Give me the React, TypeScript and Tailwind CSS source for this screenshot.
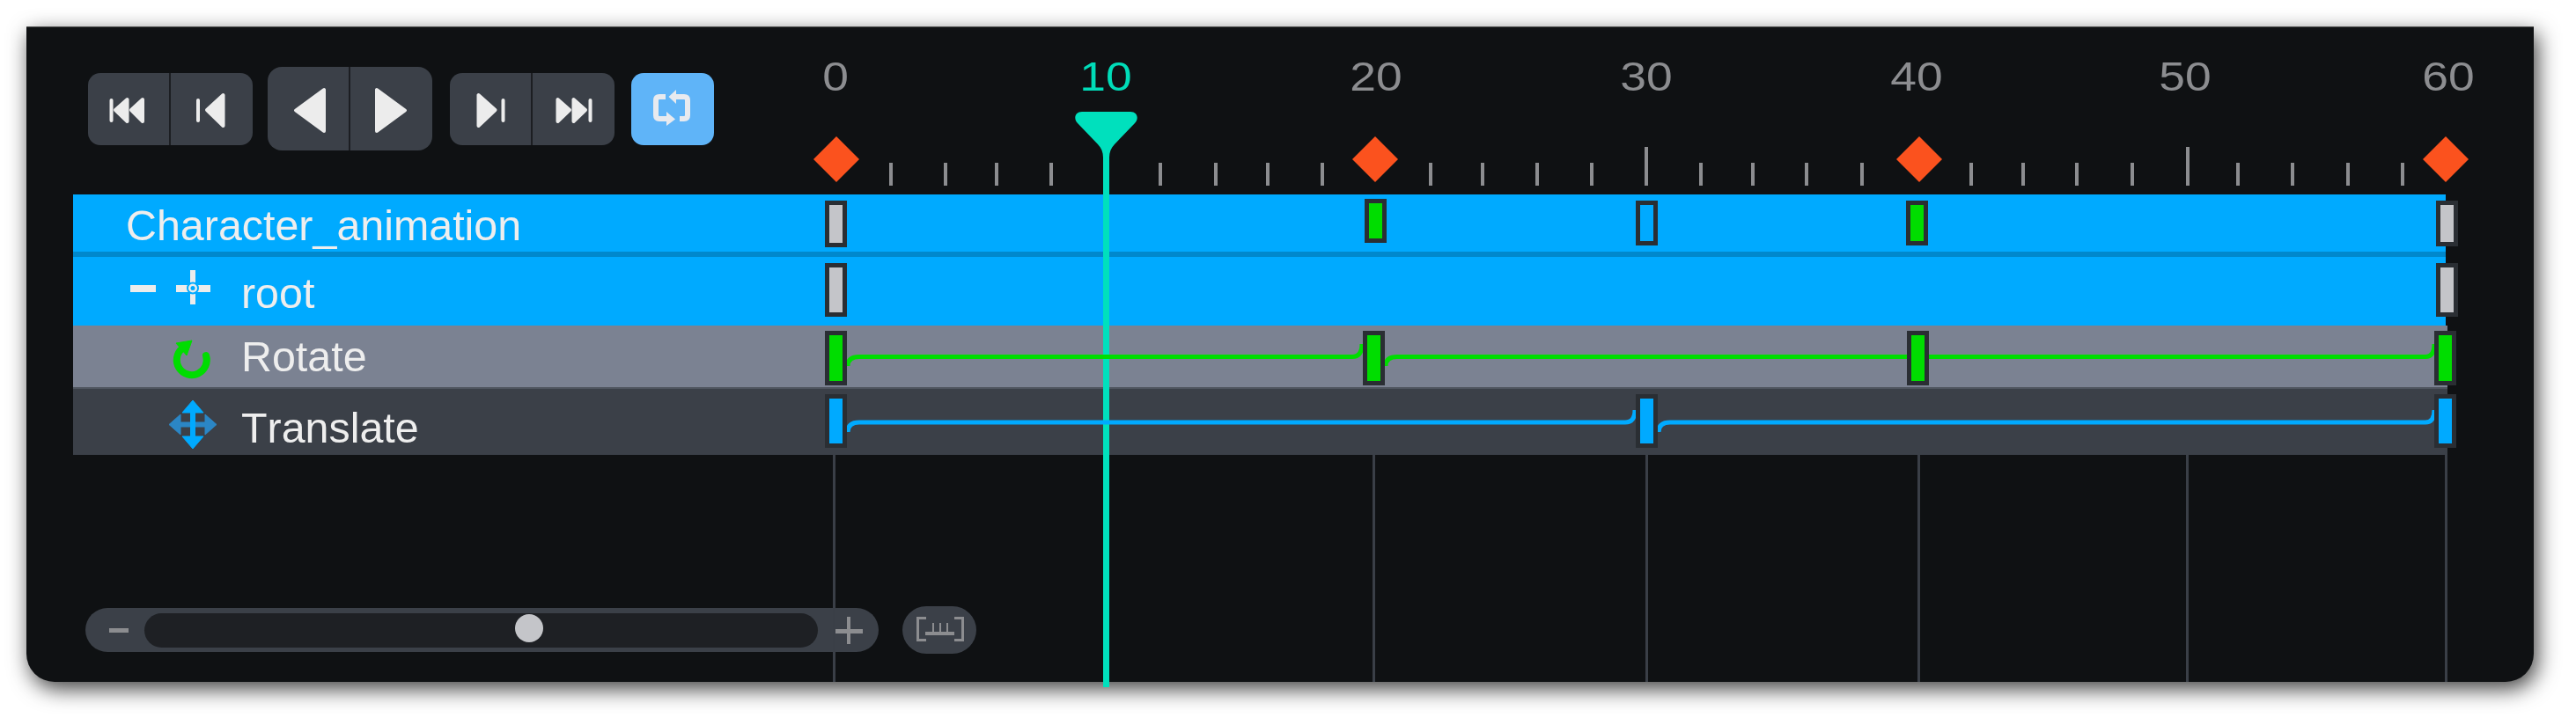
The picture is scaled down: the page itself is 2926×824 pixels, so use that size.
const TICKS = [1012, 1074, 1132, 1194, 1318, 1381, 1440, 1502, 1625, 1684, 1746, 1808, 1932, 1991, 2052, 2115, 2239, 2298, 2359, 2422, 2542, 2604, 2667, 2729];
const BIG_TICKS = [1870, 2485];
const LABELS = [
  { text: '0', x: 949 },
  { text: '10', x: 1256, active: true },
  { text: '20', x: 1563 },
  { text: '30', x: 1870 },
  { text: '40', x: 2177 },
  { text: '50', x: 2482 },
  { text: '60', x: 2781 },
];
const DIAMONDS = [950, 1562, 2180, 2778];
const GRID_LINES = [946, 1559, 1869, 2178, 2483, 2777];

const GREY = '#c4c5c9';
const GREEN = '#00dd00';
const BLUE = '#00aaff';

const KEYS = [
  { x: 937, y: 228, h: 53, color: GREY },
  { x: 1550, y: 226, h: 50, color: GREEN },
  { x: 1858, y: 228, h: 51, color: 'transparent' },
  { x: 2165, y: 228, h: 51, color: GREEN },
  { x: 2767, y: 228, h: 52, color: GREY },
  { x: 937, y: 299, h: 61, color: GREY },
  { x: 2767, y: 299, h: 61, color: GREY },
  { x: 937, y: 376, h: 62, color: GREEN },
  { x: 1548, y: 376, h: 62, color: GREEN },
  { x: 2166, y: 376, h: 62, color: GREEN },
  { x: 2765, y: 376, h: 62, color: GREEN },
  { x: 937, y: 448, h: 61, color: BLUE },
  { x: 1858, y: 448, h: 61, color: BLUE },
  { x: 2765, y: 448, h: 61, color: BLUE },
];

function Tri({ points }: { points: string }) {
  return <polygon points={points} fill="#ececec" stroke="#ececec" strokeWidth={4} strokeLinejoin="round" />;
}

function Bar({ x }: { x: number }) {
  return <rect x={x} y={112} width={4} height={27} rx={2} fill="#ececec" />;
}

function Transport() {
  return (
    <div className="flex items-center h-[95px] ml-[70px] mt-[45px]">
      <div className="flex w-[187px] h-[82px] rounded-[14px] bg-[#3b4048] overflow-hidden">
        <svg viewBox="100 83 92 82" className="w-[92px] h-[82px] block">
          <Bar x={124.5} />
          <Tri points="131,125 144.5,113 144.5,138" />
          <Tri points="149,125 162,113 162,138" />
        </svg>
        <div className="w-[2px] bg-[#1c1e22]" />
        <svg viewBox="194 83 93 82" className="w-[93px] h-[82px] block">
          <Bar x={223} />
          <Tri points="235,125 253.5,108 253.5,143" />
        </svg>
      </div>
      <div className="flex w-[187px] h-[95px] ml-[17px] rounded-[16px] bg-[#3b4048] overflow-hidden">
        <svg viewBox="304 76 92 95" className="w-[92px] h-[95px] block">
          <Tri points="336,125.5 368,102 368,149" />
        </svg>
        <div className="w-[2px] bg-[#1c1e22]" />
        <svg viewBox="398 76 93 95" className="w-[93px] h-[95px] block">
          <Tri points="460,125.5 428,102 428,149" />
        </svg>
      </div>
      <div className="flex w-[187px] h-[82px] ml-[20px] rounded-[14px] bg-[#3b4048] overflow-hidden">
        <svg viewBox="511 83 92 82" className="w-[92px] h-[82px] block">
          <Tri points="562.5,125 543.5,108 543.5,143" />
          <Bar x={569.5} />
        </svg>
        <div className="w-[2px] bg-[#1c1e22]" />
        <svg viewBox="605 83 93 82" className="w-[93px] h-[82px] block">
          <Tri points="647,125 633.5,113 633.5,138" />
          <Tri points="665,125 651.5,113 651.5,138" />
          <Bar x={668.5} />
        </svg>
      </div>
      <div className="w-[94px] h-[82px] ml-[19px] rounded-[14px] bg-[#5fb4f8]">
        <svg viewBox="717 83 94 82" className="w-[94px] h-[82px] block">
          <path d="M756 110 H749 Q745 110 745 114 V131 Q745 135 749 135 H758" fill="none" stroke="#e8eaef" strokeWidth={6} />
          <polygon points="757,127 767,135.5 757,143" fill="#e8eaef" />
          <path d="M772 135 H777 Q781 135 781 131 V114 Q781 110 777 110 H767" fill="none" stroke="#e8eaef" strokeWidth={6} />
          <polygon points="768,102 759.5,110 768,118" fill="#e8eaef" />
        </svg>
      </div>
    </div>
  );
}

function Rows() {
  return (
    <div className="ml-[53px] mt-[50px] flex flex-col w-[2697px] text-[48.4px] leading-none text-[#eeeeee] [font-kerning:none]">
      <div className="h-[65px] bg-[#00aaff] pt-[11px] pl-[60px] w-[2695px]">Character_animation</div>
      <div className="h-[6px] bg-[#0088cc] w-[2695px]" />
      <div className="h-[78px] bg-[#00aaff] pt-[17px] pl-[191px] w-[2695px] flex relative">
        <span>root</span>
        <svg viewBox="148 292 100 78" className="absolute left-[65px] top-0 w-[100px] h-[78px]">
          <rect x={148} y={324} width={29} height={8} fill="#ececec" />
          <rect x={216} y={307} width={6} height={39} fill="#ececec" />
          <rect x={200} y={324} width={39} height={8} fill="#ececec" />
          <circle cx={219} cy={327.5} r={6} fill="#ececec" stroke="#00aaff" strokeWidth={2} />
          <circle cx={219} cy={327.5} r={2.5} fill="#00aaff" />
        </svg>
      </div>
      <div className="h-[72px] bg-[#7b8292] border-b-2 border-[#4f555f] pt-[11px] pl-[191px] relative">
        <span>Rotate</span>
        <svg viewBox="190 370 60 72" className="absolute left-[107px] top-0 w-[60px] h-[72px]">
          <path d="M207 396 A17 17 0 1 0 234 404" fill="none" stroke={GREEN} strokeWidth={8} strokeLinecap="round" />
          <polygon points="200,390 218,387 212,404" fill={GREEN} stroke={GREEN} strokeWidth={1} strokeLinejoin="round" />
        </svg>
      </div>
      <div className="h-[75px] bg-[#3b4048] pt-[20px] pl-[191px] relative">
        <span>Translate</span>
        <svg viewBox="190 442 60 75" className="absolute left-[107px] top-0 w-[60px] h-[75px]">
          <path d="M192 482.5 L205 471 V480 H233 V471 L246 482.5 L233 494 V485 H205 V494 Z" fill="#2b86c5" stroke="#2b86c5" strokeWidth={1} strokeLinejoin="round" />
          <path d="M219 455 L231 469 H221.5 V496 H231 L219 510 L207 496 H216.5 V469 H207 Z" fill={BLUE} stroke={BLUE} strokeWidth={1} strokeLinejoin="round" />
        </svg>
      </div>
    </div>
  );
}

function ZoomBar() {
  return (
    <div className="ml-[67px] mt-[172px] flex items-center h-[54px]">
      <div className="flex items-center w-[901px] h-[50px] rounded-full bg-[#3b4048] pl-[27px]">
        <div className="w-[22px] h-[5px] bg-[#8c8d90]" />
        <div className="relative ml-[18px] w-[765px] h-[39px] rounded-full bg-[#1e2024]">
          <div className="absolute left-[421px] top-px size-[32px] rounded-full bg-[#c4c5c9]" />
        </div>
        <svg viewBox="0 0 31 31" className="ml-[20px] w-[31px] h-[31px]">
          <rect x={13} y={0} width={4} height={31} fill="#8c8d90" />
          <rect x={0} y={14} width={31} height={5} fill="#8c8d90" />
        </svg>
      </div>
      <div className="ml-[27px] w-[84px] h-[54px] rounded-full bg-[#3b4048]">
        <svg viewBox="1025 689 84 54" className="w-[84px] h-[54px] block">
          <path d="M1052 702.5 H1042.5 V727.5 H1052" fill="none" stroke="#8c8d90" strokeWidth={3} />
          <path d="M1084 702.5 H1093.5 V727.5 H1084" fill="none" stroke="#8c8d90" strokeWidth={3} />
          <rect x={1051} y={718} width={33} height={4} fill="#8c8d90" />
          <rect x={1059} y={708} width={2} height={10} fill="#8c8d90" />
          <rect x={1067} y={708} width={2} height={10} fill="#8c8d90" />
          <rect x={1075} y={708} width={2} height={10} fill="#8c8d90" />
        </svg>
      </div>
    </div>
  );
}

// everything whose x is a frame on the timeline, in page coordinates
function Timeline() {
  return (
    <div className="absolute inset-0 font-['Liberation_Sans',Arial,sans-serif]">
      {LABELS.map((l) => (
        <span
          key={l.text}
          className={`absolute top-[64px] -translate-x-1/2 scale-x-[1.16] text-[46px] leading-none ${l.active ? 'text-[#00dcb8]' : 'text-[#8c8d90]'}`}
          style={{ left: l.x }}
        >
          {l.text}
        </span>
      ))}
      {TICKS.map((x) => (
        <div key={x} className="absolute top-[185px] w-[4px] h-[26px] bg-[#8c8d90]" style={{ left: x - 2 }} />
      ))}
      {BIG_TICKS.map((x) => (
        <div key={x} className="absolute top-[167px] w-[4px] h-[44px] bg-[#8c8d90]" style={{ left: x - 2 }} />
      ))}
      {DIAMONDS.map((x) => (
        <svg key={x} viewBox="0 0 52 52" className="absolute top-[155px] w-[52px] h-[52px]" style={{ left: x - 26 }}>
          <polygon points="26,0 52,26 26,52 0,26" fill="#fb521e" />
        </svg>
      ))}
      {GRID_LINES.map((x) => (
        <div key={x} className="absolute top-[517px] w-[3px] h-[258px] bg-[#3a3f47]" style={{ left: x }} />
      ))}

      <svg viewBox="0 0 71 60" className="absolute left-[1221px] top-[127px] w-[71px] h-[60px] overflow-visible">
        <path d="M8 0 H63 C71 0 73 8 68 13 L45 37 C41 41 39 46 39 52 V60 H32 V52 C32 46 30 41 26 37 L3 13 C-2 8 0 0 8 0 Z" fill="#00e0bd" />
      </svg>
      <div className="absolute left-[1253px] top-[187px] w-[7px] h-[594px] bg-[#00e0bd]" />

      <svg viewBox="0 0 2926 824" className="absolute inset-0 w-[2926px] h-[824px] pointer-events-none">
        <g fill="none" strokeWidth={5}>
          <path stroke={GREEN} d="M963 416 Q963 405.5 976 405.5 H1536 Q1547 405.5 1547 391" />
          <path stroke={GREEN} d="M1574 416 Q1574 405.5 1587 405.5 H2755 Q2765 405.5 2765 391" />
          <path stroke={BLUE} d="M963 491 Q963 480 976 480 H1846 Q1857 480 1857 466" />
          <path stroke={BLUE} d="M1884 491 Q1884 480 1897 480 H2755 Q2765 480 2765 466" />
        </g>
      </svg>

      {KEYS.map((k) => (
        <div
          key={`${k.x}-${k.y}`}
          className="absolute w-[25px] border-[5px] border-[#2a2e33]"
          style={{ left: k.x, top: k.y, height: k.h, backgroundColor: k.color }}
        />
      ))}
    </div>
  );
}

export default function App() {
  return (
    <div className="relative w-[2926px] h-[824px] bg-white pl-[30px] pt-[30px] overflow-hidden font-['Liberation_Sans',Arial,sans-serif]">
      <div className="flex flex-col w-[2848px] h-[745px] rounded-b-[32px] border-t border-[#555555] bg-[#0f1113] shadow-[4px_8px_24px_rgba(0,0,0,0.75)]">
        <Transport />
        <Rows />
        <ZoomBar />
      </div>
      <Timeline />
    </div>
  );
}
